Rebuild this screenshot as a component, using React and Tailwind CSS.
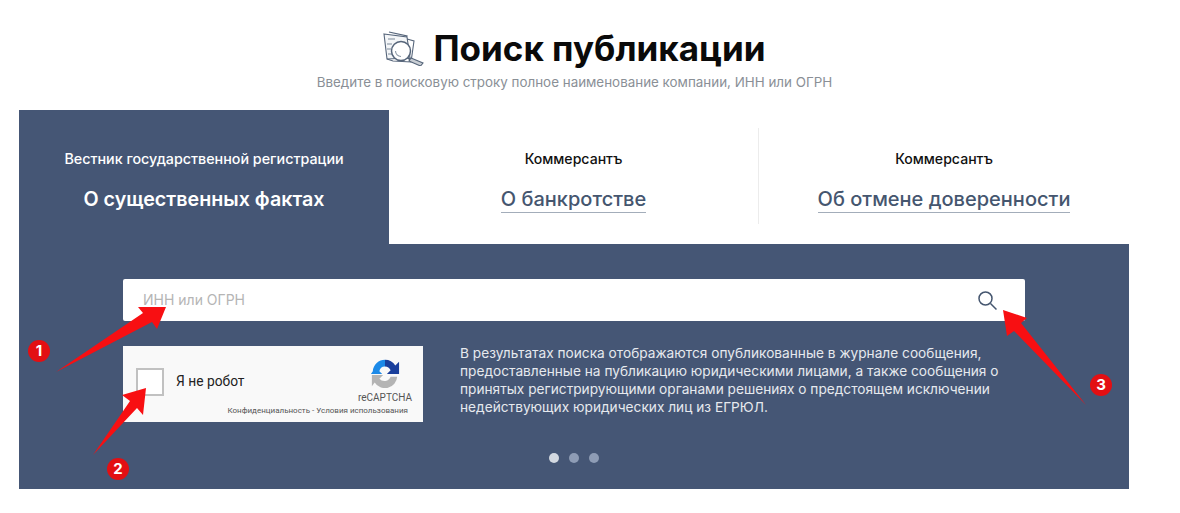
import React from "react";

function TitleIcon() {
  return (
    <svg width="41" height="35" viewBox="0 0 41 35" fill="none" stroke="#56657a" strokeWidth="1.1">
      <path d="M6 1 L24 5 L22 9" fill="#eef1f4" />
      <path d="M1 3 L24 6 L27 27 L4 28 Z" fill="#f4f6f8" />
      <path d="M24 8 L31 10 L28 31 L10 30 L4 28" />
      <path d="M5 8 H12 M4 13 H9 M4 18 H8 M5 23 H9" stroke="#7d8a99" />
      <circle cx="18" cy="20" r="9.5" fill="#ffffff" strokeWidth="1.5" />
      <path d="M12.5 20 A5.5 5.5 0 0 0 18 25.5" stroke="#8b97a5" />
      <path d="M25 27 L28 29" strokeWidth="1.8" />
      <path d="M28 27 L40 32 L37.5 35 L26 30 Z" fill="#c9ced4" />
    </svg>
  );
}

function Recaptcha() {
  return (
    <svg width="30" height="30" viewBox="0 0 32 32">
      <path d="M3 14 A13 13 0 0 1 16 2 L16 9 A6 6 0 0 0 10 14 L13 17 L1 17 Z" fill="#1c8ae8" />
      <path d="M16 2 A13 13 0 0 1 27 8 L31 4 L31 17 L18 17 L22 13 A7 7 0 0 0 16 9 Z" fill="#1a3f9c" />
      <path d="M2 18 L14 18 L10 22 A7 7 0 0 0 22 20 L29 20 A13 13 0 0 1 5 26 L2 30 Z" fill="#b4b4b4" />
    </svg>
  );
}

function Tab({ top, title, active, last }) {
  if (active) {
    return (
      <div className="flex h-full w-[370px] flex-col items-center pt-[40px] text-white">
        <div className="text-[14.3px] leading-[18px] font-medium">{top}</div>
        <div className="mt-[19px] text-[19.7px] leading-[25px] font-semibold">{title}</div>
      </div>
    );
  }
  return (
    <div className="h-full w-[370px] bg-white pt-[18px]">
      <div className={`flex h-[96px] flex-col items-center pt-[22px] ${last ? "" : "border-r border-[#ececec]"}`}>
        <div className="text-[14.1px] leading-[18px] font-medium text-[#111111]">{top}</div>
        <div className="mt-[19px] border-b border-[#a3adba] text-[20px] leading-[25px] font-medium text-[#45566f]">
          {title}
        </div>
      </div>
    </div>
  );
}

function Badge({ n, className }) {
  return (
    <div className={`absolute flex h-[22px] w-[22px] items-center justify-center rounded-full bg-[#e30f13] text-[15px] font-bold text-white ${className}`}>
      {n}
    </div>
  );
}

function Arrows() {
  return (
    <svg className="absolute top-0 left-0" width="1180" height="513" viewBox="0 0 1180 513" fill="#f80f12">
      <path d="M56 372 L143 313 L138 307 L166 307 L157 329 L152 322 Z" />
      <path d="M93 455 L130 401 L122 395 L146 388 L143 415 L137 408 Z" />
      <path d="M1086 405 L1014 331 L1007 336 L1003 310 L1027 318 L1021 323 Z" />
    </svg>
  );
}

export default function App() {
  return (
    <div className="relative h-[513px] w-[1180px] overflow-hidden bg-white font-['Inter','Liberation_Sans',sans-serif]">
      <header className="flex h-[110px] flex-col items-center pt-[28px] pr-[31px]">
        <div className="flex h-[40px] items-center">
          <TitleIcon />
          <h1 className="ml-[9px] text-[35px] leading-[40px] font-bold text-[#0a0a0a]">Поиск публикации</h1>
        </div>
        <p className="mt-[4px] text-[13.4px] leading-[20px] text-[#8a8f96]">
          Введите в поисковую строку полное наименование компании, ИНН или ОГРН
        </p>
      </header>

      <main className="ml-[19px] h-[379px] w-[1110px] bg-[#455675]">
        <div className="flex h-[134px]">
          <Tab active top="Вестник государственной регистрации" title="О существенных фактах" />
          <Tab top="Коммерсантъ" title="О банкротстве" />
          <Tab last top="Коммерсантъ" title="Об отмене доверенности" />
        </div>

        <div className="px-[104px] pt-[35px]">
          <div className="flex h-[42px] w-[902px] items-center justify-between rounded-[2px] bg-white pr-[27px] pl-[20px]">
            <span className="mt-[-2px] text-[14px] text-[#b5b5b5]">ИНН или ОГРН</span>
            <svg width="21" height="21" viewBox="0 0 21 21" fill="none" stroke="#45566f" strokeWidth="1.5">
              <circle cx="8.5" cy="8.5" r="6.5" />
              <path d="M13.5 13.5 L19.5 19.5" />
            </svg>
          </div>

          <div className="mt-[25px] flex items-start">
            <div className="relative h-[76px] w-[300px] shrink-0 bg-[#f9f9f9]">
              <div className="flex h-full items-center pb-[5px] pl-[13px]">
                <div className="h-[28px] w-[28px] border-2 border-[#c1c1c1] bg-white" />
                <span className="ml-[12px] text-[13.8px] text-[#222222] font-['Roboto',sans-serif]">Я не робот</span>
              </div>
              <div className="absolute top-[12px] right-[23px]">
                <Recaptcha />
              </div>
              <div className="absolute top-[46px] right-[11px] text-[10px] leading-[12px] text-[#555555] font-['Roboto',sans-serif]">
                reCAPTCHA
              </div>
              <div className="absolute top-[60px] right-[15px] text-[8px] leading-[10px] text-[#555555] font-['Roboto',sans-serif]">
                Конфиденциальность - Условия использования
              </div>
            </div>
            <p className="mt-[-2px] ml-[37px] w-[560px] text-[13.7px] leading-[18px] text-[#e6e9ee]">
              В результатах поиска отображаются опубликованные в журнале сообщения, предоставленные на публикацию
              юридическими лицами, а также сообщения о принятых регистрирующими органами решениях о предстоящем
              исключении недействующих юридических лиц из ЕГРЮЛ.
            </p>
          </div>

          <div className="mt-[31px] ml-[426px] flex items-center gap-[10px]">
            <span className="h-[10px] w-[10px] rounded-full bg-[#d3d9e1]" />
            <span className="h-[10px] w-[10px] rounded-full bg-[#8e9cb5]" />
            <span className="h-[10px] w-[10px] rounded-full bg-[#8e9cb5]" />
          </div>
        </div>
      </main>

      <Arrows />
      <Badge n="1" className="top-[340px] left-[28px]" />
      <Badge n="2" className="top-[458px] left-[107px]" />
      <Badge n="3" className="top-[374px] left-[1090px]" />
    </div>
  );
}
